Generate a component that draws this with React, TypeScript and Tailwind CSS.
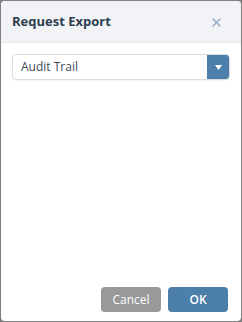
export default function App() {
  return (
    <div className="h-[322px] w-[242px] bg-[#808080] p-px" style={{ fontFamily: '"Open Sans", "Noto Sans", sans-serif' }}>
      <div className="flex h-full flex-col overflow-hidden rounded-[4px] bg-white">
        {/* Header */}
        <div className="flex h-[42px] shrink-0 items-center justify-between border-b border-[#e3e6ea] bg-[#f1f3f6] pl-[11px] pr-[20px]">
          <span className="text-[13px] font-bold text-[#2d3e50]">Request Export</span>
          <svg width="9" height="9" viewBox="0 0 9 9" className="mt-px">
            <path d="M0.6 0.6l7.8 7.8M8.4 0.6l-7.8 7.8" stroke="#9fb5ca" strokeWidth="1.6" />
          </svg>
        </div>

        {/* Body */}
        <div className="flex-1 px-[11px] pt-[11px]">
          <div className="flex h-[26px] items-stretch rounded-[4px] border border-[#d9dde2] shadow-[0_1px_1px_rgba(0,0,0,0.04)]">
            <div className="flex flex-1 items-center pl-[8px] text-[12px] text-[#404a55]">Audit Trail</div>
            <div className="flex w-[22px] items-center justify-center rounded-r-[3px] bg-[#4c80aa]">
              <svg width="7" height="5" viewBox="0 0 7 5">
                <path d="M0 0h7L3.5 5z" fill="#ffffff" />
              </svg>
            </div>
          </div>
        </div>

        {/* Footer */}
        <div className="flex justify-end gap-[7px] px-[13px] pb-[9px]">
          <button className="h-[25px] w-[60px] rounded-[4px] bg-[#999999] text-[12px] text-white">Cancel</button>
          <button className="h-[25px] w-[60px] rounded-[4px] bg-[#4c80aa] text-[12px] font-semibold text-white">OK</button>
        </div>
      </div>
    </div>
  );
}
